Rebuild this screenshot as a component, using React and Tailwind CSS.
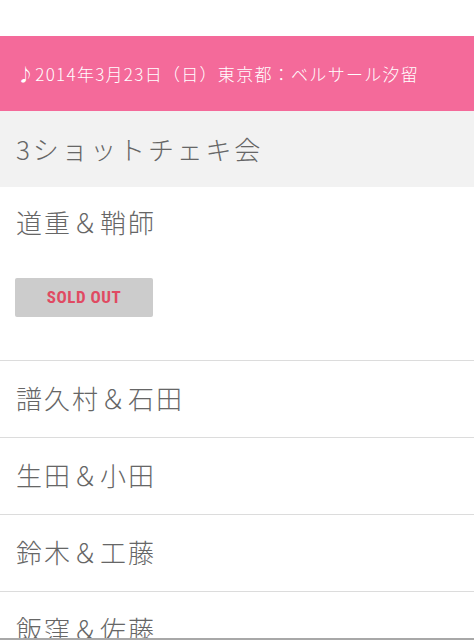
export default function App() {
  const jp = { fontFamily: '"Noto Sans CJK JP", "Noto Sans", sans-serif' };
  const rows = ["譜久村＆石田", "生田＆小田", "鈴木＆工藤", "飯窪＆佐藤"];
  return (
    <div className="w-[474px] h-[640px] flex flex-col bg-white" style={jp}>
      <div className="flex-1 overflow-hidden">
        <div className="h-[36px]" />
        <div className="h-[75px] bg-[#f46a9a] flex items-center px-[17px] text-white text-[17px] font-light tracking-[1.3px]">
          ♪2014年3月23日（日）東京都：ベルサール汐留
        </div>
        <div className="h-[76px] bg-[#f2f2f2] flex items-center px-[16px] pb-[2px] text-[#666] text-[26px] font-light tracking-[2.8px]">
          3ショットチェキ会
        </div>
        <div className="h-[174px] border-b border-[#dcdcdc] px-[15px] pt-[15px]">
          <div className="text-[26px] text-[#666] font-light tracking-[2px] leading-[40px] pl-[1px]">道重＆鞘師</div>
          <div className="mt-[36px] w-[138px] h-[39px] bg-[#cccccc] rounded-[2px] flex items-center justify-center">
            <span
              className="text-[#e04a62] text-[17px] font-bold tracking-[0.5px]"
              style={{ fontFamily: '"Liberation Sans Narrow", "Roboto Condensed", "Liberation Sans", sans-serif' }}
            >
              SOLD OUT
            </span>
          </div>
        </div>
        {rows.map((r) => (
          <div key={r} className="h-[77px] border-b border-[#dcdcdc] flex items-center px-[16px] pb-[3px] text-[26px] text-[#666] font-light tracking-[2px]">
            {r}
          </div>
        ))}
      </div>
      <div className="h-[2px] bg-[#a8a8a8]" />
    </div>
  );
}
